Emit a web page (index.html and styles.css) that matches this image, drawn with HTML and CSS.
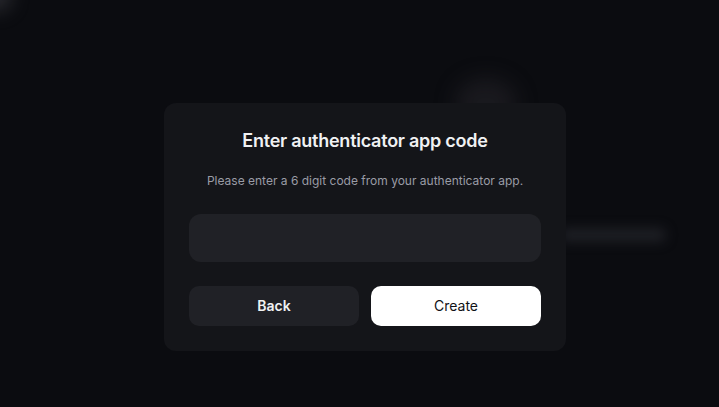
FILE: index.html
```html
<!DOCTYPE html>
<html lang="en">
<head>
<meta charset="utf-8">
<title>Enter authenticator app code</title>
<link rel="stylesheet" href="styles.css">
</head>
<body>
<div class="backdrop" aria-hidden="true">
  <div class="blur blur-corner"></div>
  <div class="blur blur-avatar"></div>
  <div class="blur blur-bar"></div>
</div>
<main class="stage">
  <section class="card">
    <h1 class="title">Enter authenticator app code</h1>
    <p class="subtitle">Please enter a 6 digit code from your authenticator app.</p>
    <input class="code-input" type="text" inputmode="numeric" maxlength="6" aria-label="Authenticator code">
    <div class="actions">
      <button class="btn btn-back" type="button">Back</button>
      <button class="btn btn-create" type="button">Create</button>
    </div>
  </section>
</main>
</body>
</html>
```

FILE: styles.css
```css
* { box-sizing: border-box; }
html, body { margin: 0; height: 100%; }
body {
  background: #0b0c10;
  font-family: Inter, "Noto Sans", "Liberation Sans", sans-serif;
  color: #f2f3f5;
  overflow: hidden;
  position: relative;
}
.backdrop { position: absolute; inset: 0; pointer-events: none; }
.blur { position: absolute; filter: blur(10px); }
.blur-corner {
  left: -18px; top: -18px; width: 28px; height: 28px; border-radius: 50%;
  background: rgba(120, 120, 128, 0.35);
}
.blur-avatar {
  left: 455px; top: 78px; width: 62px; height: 50px; border-radius: 50%;
  background: rgba(40, 38, 44, 0.5);
}
.blur-bar {
  left: 560px; top: 228px; width: 106px; height: 14px; border-radius: 7px;
  background: rgba(40, 41, 48, 0.65);
  filter: blur(6px);
}
.stage {
  position: relative;
  padding: 103px 0 0 164px;
}
.card {
  width: 402px;
  background: #141519;
  border-radius: 12px;
  padding: 24px 25px 25px;
  display: flex;
  flex-direction: column;
  align-items: stretch;
}
.title {
  margin: 0;
  font-size: 18px;
  line-height: 28px;
  font-weight: 600;
  letter-spacing: -0.25px;
  text-align: center;
  color: #f0f1f3;
}
.subtitle {
  margin: 18px 0 0;
  font-size: 12px;
  line-height: 16px;
  text-align: center;
  color: #9a9ca6;
}
.code-input {
  margin-top: 25px;
  height: 48px;
  border: none;
  border-radius: 12px;
  background: #202126;
  color: #f0f1f3;
  font: inherit;
  font-size: 16px;
  padding: 0 16px;
  outline: none;
}
.actions {
  margin-top: 24px;
  display: grid;
  grid-template-columns: 1fr 1fr;
  gap: 12px;
}
.btn {
  height: 40px;
  border: none;
  border-radius: 10px;
  font-family: inherit;
  font-size: 14px;
  line-height: 38px;
  padding: 0;
  cursor: pointer;
}
.btn-back {
  background: #202126;
  color: #f0f1f3;
  font-weight: 600;
}
.btn-create {
  background: #ffffff;
  color: #111216;
  font-weight: 400;
}
```
